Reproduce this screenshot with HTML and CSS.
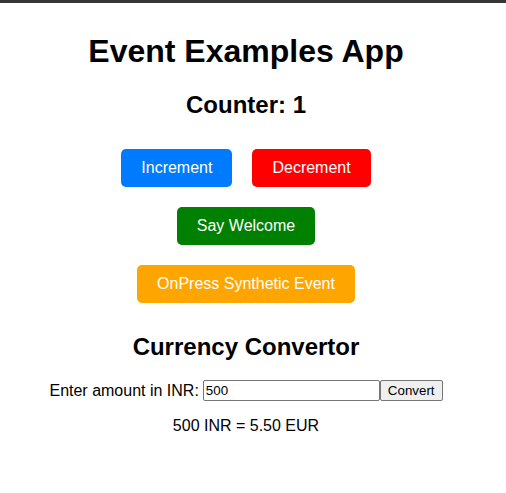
FILE: index.html
```html
<!DOCTYPE html>
<html lang="en">
<head>
<meta charset="utf-8">
<title>Event Examples App</title>
<link rel="stylesheet" href="styles.css">
</head>
<body>
<div class="topbar"></div>
<div class="app">
  <h1 class="title">Event Examples App</h1>
  <h2 class="counter">Counter: 1</h2>
  <div class="controls">
    <div class="row">
      <button class="btn btn-blue">Increment</button>
      <button class="btn btn-red">Decrement</button>
    </div>
    <div class="row">
      <button class="btn btn-green">Say Welcome</button>
    </div>
    <div class="row">
      <button class="btn btn-orange">OnPress Synthetic Event</button>
    </div>
  </div>
  <h2 class="currency">Currency Convertor</h2>
  <div class="convert-row">
    <label class="amount-label" for="amount">Enter amount in INR:</label><input id="amount" class="amount" type="text" value="500"><button class="convert-btn">Convert</button>
  </div>
  <p class="result">500 INR = 5.50 EUR</p>
</div>
</body>
</html>
```
FILE: styles.css
```css
html, body {
  margin: 0;
  padding: 0;
  background: #ffffff;
}

.topbar {
  height: 3px;
  background: #363636;
}

.app {
  width: 492px;
  text-align: center;
  font-family: "Liberation Sans", Arial, sans-serif;
  color: #000;
}

.title {
  font-size: 32px;
  line-height: 37px;
  font-weight: bold;
  margin: 30px 0 0;
}

.counter {
  font-size: 24px;
  line-height: 28px;
  font-weight: bold;
  margin: 21px 0 0;
}

.controls {
  margin-top: 30px;
  display: flex;
  flex-direction: column;
  align-items: center;
  gap: 20px;
}

.row {
  display: flex;
  justify-content: center;
  gap: 20px;
}

.btn {
  font-family: "Liberation Sans", Arial, sans-serif;
  font-size: 16px;
  line-height: 18px;
  padding: 10px 20px;
  border: none;
  border-radius: 5px;
  color: #ffffff;
  cursor: pointer;
}

.btn-blue { background: #007bff; }
.btn-red { background: #ff0000; }
.btn-green { background: #008000; }
.btn-orange { background: #ffa500; }

.currency {
  font-size: 24px;
  line-height: 28px;
  font-weight: bold;
  margin: 30px 0 0;
}

.convert-row {
  margin-top: 19px;
  display: flex;
  justify-content: center;
  align-items: center;
  font-size: 16px;
}

.amount-label {
  margin-right: 4px;
}

.amount {
  box-sizing: border-box;
  width: 177px;
  height: 21px;
  padding: 1px 2px;
  border: 1px solid #767676;
  border-radius: 2px;
  font-family: "Liberation Sans", Arial, sans-serif;
  font-size: 13.333px;
  color: #000;
  margin: 0;
}

.convert-btn {
  box-sizing: border-box;
  height: 21px;
  padding: 1px 7px;
  border: 1px solid #767676;
  border-radius: 2px;
  background: #efefef;
  font-family: "Liberation Sans", Arial, sans-serif;
  font-size: 13.333px;
  color: #000;
  margin: 0;
}

.result {
  margin: 16px 0 0;
  font-size: 16px;
}
```
